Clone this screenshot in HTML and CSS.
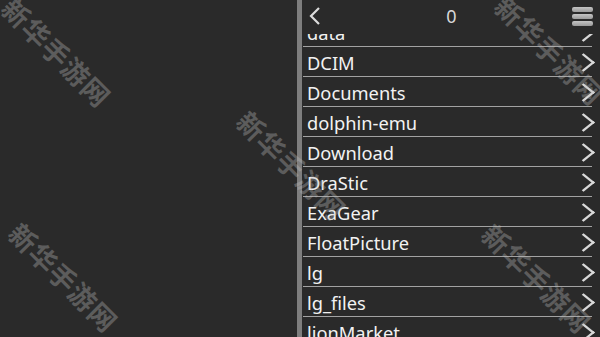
FILE: index.html
```html
<!DOCTYPE html>
<html>
<head>
  <title>Files</title>
  <meta charset="UTF-8">
  <meta name="viewport" content="width=device-width,initial-scale=1">
  <link rel="stylesheet" href="styles.css">
</head>

<body>
  <div class="screen">
    <div class="left-pane"></div>
    <div class="divider"></div>

    <div class="browser">
      <div class="topbar">
        <svg class="back" width="12" height="18" viewBox="0 0 12 18"><polyline points="10,1 2,9 10,17" /></svg>
        <span class="count">0</span>
        <div class="menu"><span></span><span></span><span></span></div>
      </div>

      <div class="list-view">
        <ul class="folders">
          <li>data</li>
          <li>DCIM</li>
          <li>Documents</li>
          <li>dolphin-emu</li>
          <li>Download</li>
          <li>DraStic</li>
          <li>ExaGear</li>
          <li>FloatPicture</li>
          <li>lg</li>
          <li>lg_files</li>
          <li>lionMarket</li>
        </ul>
      </div>
    </div>

    <!-- watermark overlay -->
    <span class="mark mark-1">新华手游网</span>
    <span class="mark mark-2">新华手游网</span>
    <span class="mark mark-3">新华手游网</span>
    <span class="mark mark-4">新华手游网</span>
    <span class="mark mark-5">新华手游网</span>
  </div>
</body>
</html>
```

FILE: styles.css
```css
*, *:before, *:after {
  box-sizing: border-box;
}

html, body {
  width: 100%;
  height: 100%;
  margin: 0;
}

body {
  background: #2a2a2a;
  font-family: "Noto Sans", "Open Sans", sans-serif;
  color: #f2f2f2;
  overflow: hidden;
}

.screen {
  position: relative;
  display: flex;
  width: 600px;
  height: 337px;
  overflow: hidden;
}

.left-pane {
  width: 297px;
  background: #2a2a2a;
}

.divider {
  width: 5px;
  background: #7e7e7e;
}

.browser {
  flex: 1;
  display: flex;
  flex-direction: column;
  background: #2a2a2a;
}

.topbar {
  height: 34px;
  display: flex;
  align-items: center;
  justify-content: space-between;
  padding: 0 7px 2px 7px;
}

.back polyline {
  fill: none;
  stroke: #dcdcdc;
  stroke-width: 2.2;
}

.count {
  font-size: 18px;
  color: #d8d8d8;
  margin-left: 10px;
}

.menu {
  display: flex;
  flex-direction: column;
  gap: 2px;
  width: 21px;
  margin-top: 1px;
}

.menu span {
  height: 5px;
  border-radius: 2px;
  background: linear-gradient(#c4c4c4, #9a9a9a);
}

.list-view {
  flex: 1;
  overflow: hidden;
}

.folders {
  list-style: none;
  margin: -17px 8px 0 1px;
  padding: 0;
}

.folders li {
  display: flex;
  justify-content: space-between;
  align-items: center;
  padding: 2px 0 0 4px;
  line-height: 27px;
  font-size: 18.3px;
  border-bottom: 1px solid #a2a2a2;
}

/* thin chevron */
.folders li:after {
  content: "";
  width: 13px;
  height: 13px;
  margin-right: 0;
  border-top: 2px solid #d8d8d8;
  border-right: 2px solid #d8d8d8;
  transform: translateX(-2px) scale(1.25, 1) rotate(45deg);
}

.mark {
  position: absolute;
  font-family: "Noto Sans CJK SC", sans-serif;
  font-weight: bold;
  font-size: 27px;
  letter-spacing: 1px;
  color: rgba(190, 190, 190, 0.34);
  transform: translate(-50%, -50%) rotate(45deg);
  white-space: nowrap;
  line-height: 1;
}

.mark-1 { left: 57px;  top: 52px; }
.mark-2 { left: 292px; top: 165px; }
.mark-3 { left: 64px;  top: 277px; }
.mark-4 { left: 550px; top: 50px; }
.mark-5 { left: 537px; top: 278px; }
```
